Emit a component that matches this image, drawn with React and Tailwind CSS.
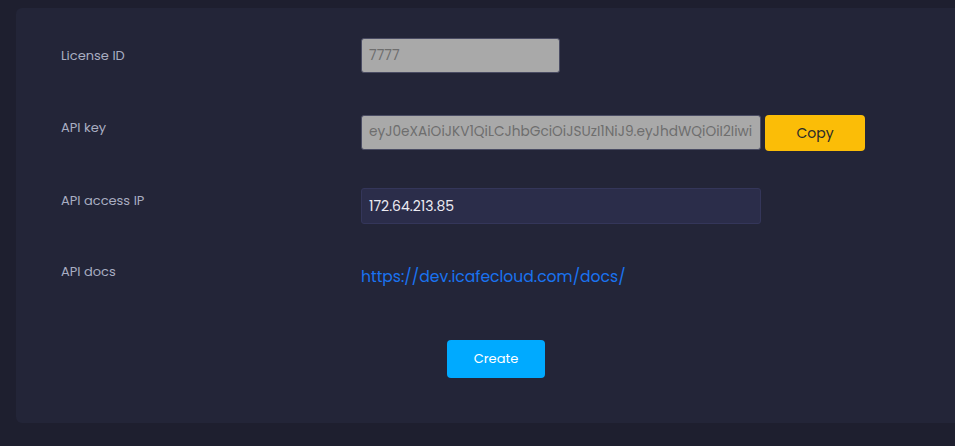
export default function App() {
  const font = { fontFamily: '"Poppins", "Open Sans", "Liberation Sans", sans-serif' };
  return (
    <div className="w-[955px] h-[446px] overflow-hidden bg-[#1e1f2f]" style={font}>
      <div className="ml-[16px] mt-[8px] w-[960px] h-[415px] rounded-[6px] bg-[#232538] pl-[45px] pt-[30px] flex flex-col">
        {/* License ID */}
        <div className="flex items-center h-[35px]">
          <div className="w-[300px] text-[13px] pt-[1px] text-[#a9aec2]">License ID</div>
          <div className="w-[199px] h-[35px] rounded-[3px] bg-[#a9a9a9] border border-[#4a4c63] px-[7px] flex items-center text-[14px] text-[#6e6e6e]">
            7777
          </div>
        </div>
        {/* API key */}
        <div className="flex items-start mt-[42px]">
          <div className="w-[300px] text-[13px] leading-[20px] pt-[3px] text-[#a9aec2]">API key</div>
          <div className="w-[400px] h-[35px] rounded-[3px] bg-[#a9a9a9] border border-[#4a4c63] px-[7px] flex items-center">
            <div className="whitespace-nowrap text-[13.7px] text-[#6e6e6e]">
              eyJ0eXAiOiJKV1QiLCJhbGciOiJSUzI1NiJ9.eyJhdWQiOiI2Iiwi
            </div>
          </div>
          <button className="ml-[4px] w-[100px] h-[36px] rounded-[4px] bg-[#fbbd07] text-[14px] text-[#2a2a2a]">
            Copy
          </button>
        </div>
        {/* API access IP */}
        <div className="flex items-start mt-[37px]">
          <div className="w-[300px] text-[13px] leading-[20px] pt-[3px] text-[#a9aec2]">API access IP</div>
          <div className="w-[400px] h-[36px] rounded-[3px] bg-[#2b2d4a] border border-[#34365a] px-[7px] flex items-center text-[14px] text-[#ecebf2]">
            172.64.213.85
          </div>
        </div>
        {/* API docs */}
        <div className="flex items-start mt-[40px]">
          <div className="w-[300px] text-[13px] leading-[16px] text-[#a9aec2]">API docs</div>
          <a className="text-[15.6px] leading-[24px] pt-[1px] text-[#1a73f0]" href="#">
            https://dev.icafecloud.com/docs/
          </a>
        </div>
        {/* Create */}
        <div className="mt-[51px] pl-[386px]">
          <button className="w-[98px] h-[38px] rounded-[4px] bg-[#00aaff] text-[13px] text-white">
            Create
          </button>
        </div>
      </div>
    </div>
  );
}
